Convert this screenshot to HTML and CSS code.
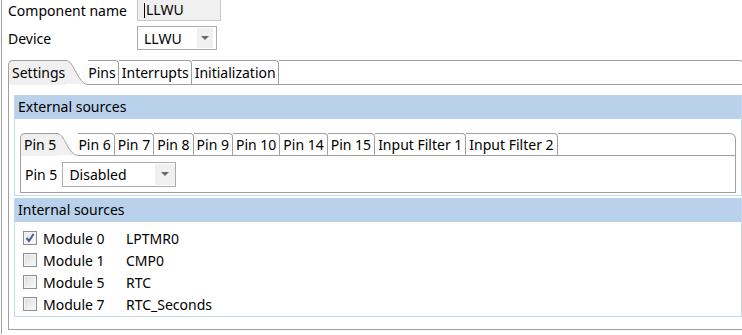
FILE: index.html
```html
<!DOCTYPE html>
<html lang="en">
<head>
  <meta charset="UTF-8">
  <title>LLWU</title>
  <link rel="stylesheet" href="styles.css">
</head>
<body>
  <div class="shell">
    <div class="props">
      <label>Component name</label>
      <div class="textbox"><span class="caret"></span>LLWU</div>
      <label>Device</label>
      <div class="combo device"><span class="val">LLWU</span><span class="arrow"></span></div>
    </div>

    <div class="folder outer">
      <div class="tabstrip">
        <div class="tab sel">Settings</div>
        <svg class="curve" width="22" height="25" viewBox="0 0 22 25">
          <path d="M0,1 C8,1 12,24 22,24 L0,24 Z" fill="#f0f0f0"/>
          <path d="M0,0.5 C8,0.5 12,24.5 22,24.5" fill="none" stroke="#a0a0a0"/>
        </svg>
        <div class="tab after">Pins</div>
        <div class="tab">Interrupts</div>
        <div class="tab">Initialization</div>
        <div class="fill"></div>
      </div>
      <div class="body">
        <div class="group">
          <div class="group-head">External sources</div>
          <div class="group-body">
            <div class="folder inner">
              <div class="tabstrip">
                <div class="tab sel">Pin 5</div>
                <svg class="curve" width="21" height="23" viewBox="0 0 21 23">
                  <path d="M0,1 C8,1 11,22 21,22 L0,22 Z" fill="#f0f0f0"/>
                  <path d="M0,0.5 C8,0.5 11,22.5 21,22.5" fill="none" stroke="#a0a0a0"/>
                </svg>
                <div class="tab after">Pin 6</div>
                <div class="tab">Pin 7</div>
                <div class="tab">Pin 8</div>
                <div class="tab">Pin 9</div>
                <div class="tab">Pin 10</div>
                <div class="tab">Pin 14</div>
                <div class="tab">Pin 15</div>
                <div class="tab">Input Filter 1</div>
                <div class="tab">Input Filter 2</div>
                <div class="fill"></div>
              </div>
              <div class="body">
                <span>Pin 5</span>
                <div class="combo pin"><span class="val">Disabled</span><span class="arrow"></span></div>
              </div>
            </div>
          </div>
        </div>

        <div class="group">
          <div class="group-head">Internal sources</div>
          <div class="modules">
            <span class="box checked"><svg width="12" height="12" viewBox="0 0 12 12"><path d="M2.5,6 L5,9 L9.5,2" fill="none" stroke="#4a5d9c" stroke-width="2"/></svg></span>
            <span>Module 0</span><span>LPTMR0</span>
            <span class="box"></span><span>Module 1</span><span>CMP0</span>
            <span class="box"></span><span>Module 5</span><span>RTC</span>
            <span class="box"></span><span>Module 7</span><span>RTC_Seconds</span>
          </div>
        </div>
      </div>
    </div>
  </div>
</body>
</html>
```

FILE: styles.css
```css
* {
  box-sizing: border-box;
}

body {
  margin: 0;
  font-family: "Noto Sans", "Open Sans", sans-serif;
  font-size: 14px;
  color: #000;
  background-color: #fff;
  overflow: hidden;
}

.shell {
  margin-left: 1px;
  border-left: 1px solid #a0a0a0;
  height: 335px;
  padding-left: 6px;
}

/* name / device rows */
.props {
  display: grid;
  grid-template-columns: 129px 84px;
  grid-template-rows: 22px 24px;
  row-gap: 5px;
  margin-top: -1px;
  align-items: center;
}

.textbox {
  height: 22px;
  border: 1px solid #c8c8c8;
  background-color: #f0f0f0;
  padding-left: 6px;
  line-height: 20px;
}

.caret {
  display: inline-block;
  width: 1px;
  height: 15px;
  background-color: #000;
  vertical-align: -3px;
  margin-right: 1px;
}

.combo {
  display: flex;
  align-items: center;
  height: 24px;
  border: 1px solid #acacac;
  background-color: #fff;
  padding-left: 6px;
}

.combo .val {
  flex: 1;
}

.combo .arrow {
  display: flex;
  align-items: center;
  justify-content: center;
  width: 16px;
  height: 20px;
  margin-right: 3px;
  background-color: #f0f0f0;
}

.combo .arrow::after {
  content: "";
  border-left: 4px solid transparent;
  border-right: 4px solid transparent;
  border-top: 4px solid #6a6a6a;
}

.device {
  width: 80px;
}

.pin {
  width: 114px;
  height: 25px;
}

.pin .arrow {
  width: 20px;
  height: 21px;
  margin-right: 0;
}

/* tab folders */
.folder {
  display: flex;
  flex-direction: column;
}

.outer {
  margin-top: 10px;
  margin-right: -3px;
}

.tabstrip {
  display: flex;
  height: 25px;
}

.tab {
  border-top: 1px solid #a0a0a0;
  border-bottom: 1px solid #a0a0a0;
  border-right: 1px solid #a0a0a0;
  border-top-right-radius: 4px;
  padding: 0 2px 0 3px;
  line-height: 23px;
  background-color: #fff;
  white-space: nowrap;
}

.tab.sel {
  border-left: 1px solid #a0a0a0;
  border-right: 0;
  border-bottom: 0;
  border-radius: 5px 0 0 0;
  background-color: #f0f0f0;
  padding: 0 1px 0 3px;
}

.tab.after {
  padding-left: 0;
}

.curve {
  display: block;
  flex: none;
}

.fill {
  flex: 1;
  border-top: 1px solid #a0a0a0;
  border-bottom: 1px solid #a0a0a0;
  border-right: 1px solid #a0a0a0;
  border-top-right-radius: 6px;
}

.outer > .body {
  border: 1px solid #a0a0a0;
  border-top: 0;
  padding: 10px 2px 12px 5px;
}

.inner .tabstrip {
  height: 23px;
}

.inner .tab {
  line-height: 21px;
  padding: 0 3px;
}

.inner .tab.sel {
  padding: 0 1px 0 3px;
}

.inner .tab.after {
  padding-left: 0;
}

.inner > .body {
  display: flex;
  align-items: center;
  gap: 5px;
  height: 37px;
  border: 1px solid #a0a0a0;
  border-top: 0;
  padding-left: 4px;
}

/* groups */
.group {
  border: 1px solid #c4d8ed;
  border-top: 0;
}

.group + .group {
  margin-top: 2px;
}

.group-head {
  height: 24px;
  line-height: 24px;
  padding-left: 3px;
  background-color: #b9d1ea;
}

.group-body {
  padding: 14px 5px 2px 5px;
}

.modules {
  display: grid;
  grid-template-columns: 14px 77px auto;
  grid-auto-rows: 22px;
  column-gap: 6px;
  align-items: center;
  padding: 5px 0 1px 8px;
}

.box {
  display: flex;
  align-items: center;
  justify-content: center;
  width: 14px;
  height: 14px;
  border: 1px solid #8e8f8f;
  background: linear-gradient(135deg, #dcdcdc, #fbfbfb);
  box-shadow: inset 0 0 0 1px #f4f4f4;
}

.box.checked {
  background: linear-gradient(135deg, #e6e6e6, #fdfdfd);
}
```
